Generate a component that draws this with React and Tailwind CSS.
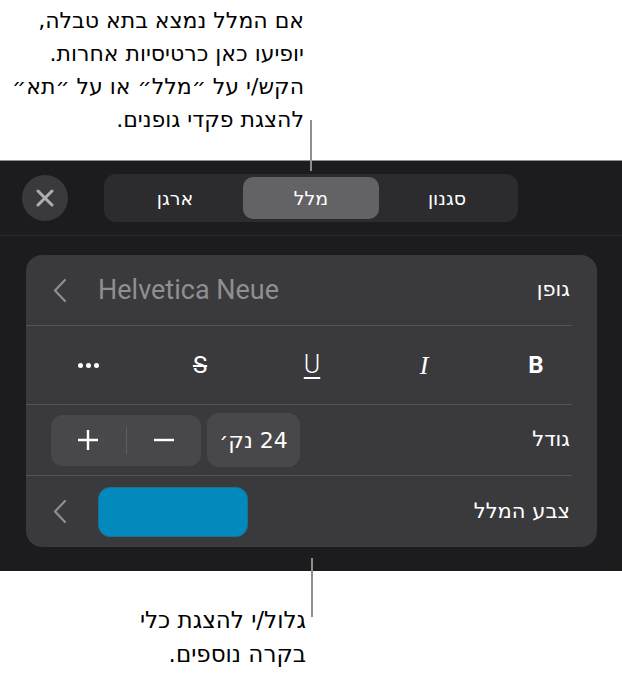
import React from 'react';

const Chevron = () => (
  <svg width="16" height="25" viewBox="0 0 16 25" fill="none">
    <polyline points="13,2 3,12.5 13,23" stroke="#8e8e93" strokeWidth="2.2" strokeLinecap="round" strokeLinejoin="round" />
  </svg>
);

const Sep = () => <div className="h-px mr-[25px] bg-[#545456]"></div>;

export default function App() {
  return (
    <div className="relative w-[622px] h-[673px] bg-white font-['DejaVu_Sans',sans-serif] overflow-hidden">
      {/* top callout */}
      <div className="h-[160px] pt-[4px]">
        <div dir="rtl" className="w-[304px] text-right text-[22px] leading-[33px] text-black">
          <div>אם המלל נמצא בתא טבלה,</div>
          <div>יופיעו כאן כרטיסיות אחרות.</div>
          <div>הקש/י על ״מלל״ או על ״תא״</div>
          <div>להצגת פקדי גופנים.</div>
        </div>
      </div>

      {/* dark panel */}
      <div className="h-[411px] bg-[#1c1c1e] border-t border-[#8e8e93]">
        <div className="h-[75px] flex items-center border-b border-[#2c2c2e]">
          <div className="ml-[22px] w-[46px] h-[46px] rounded-full bg-[#3a3a3c] flex items-center justify-center">
            <svg width="18" height="18" viewBox="0 0 18 18">
              <path d="M2 2 L16 16 M16 2 L2 16" stroke="#aeaeb2" strokeWidth="3" strokeLinecap="round" />
            </svg>
          </div>
          <div className="ml-[36px] w-[414px] h-[48px] rounded-[12px] bg-[#2c2c2e] p-[3px] grid grid-cols-3 text-[19px] text-white">
            <div className="flex items-center justify-center">ארגן</div>
            <div className="flex items-center justify-center rounded-[10px] bg-[#636366]">מלל</div>
            <div className="flex items-center justify-center">סגנון</div>
          </div>
        </div>

        <div className="mr-[25px] ml-[26px] mt-[19px] rounded-[16px] bg-[#3a3a3c] text-white">
          {/* font row */}
          <div className="h-[70px] flex items-center justify-between pl-[26px] pr-[27px]">
            <div className="flex items-center gap-[30px]">
              <Chevron />
              <span className="font-['Roboto',sans-serif] text-[27px] text-[#8e8e93]">Helvetica Neue</span>
            </div>
            <span className="text-[21px]">גופן</span>
          </div>
          <Sep />
          {/* style row */}
          <div className="h-[78px] grid grid-cols-5 items-center pl-[6px] pr-[5px] text-white">
            <div className="flex justify-center gap-[3px]">
              <span className="w-[5px] h-[5px] rounded-full bg-white"></span>
              <span className="w-[5px] h-[5px] rounded-full bg-white"></span>
              <span className="w-[5px] h-[5px] rounded-full bg-white"></span>
            </div>
            <div className="flex justify-center font-['Roboto',sans-serif] text-[24px] line-through decoration-[2px]">S</div>
            <div className="flex justify-center font-['Roboto',sans-serif] font-light text-[25px] underline decoration-[2px] underline-offset-[4px]">U</div>
            <div className="flex justify-center font-['Liberation_Serif',serif] italic text-[26px]">I</div>
            <div className="flex justify-center font-['Roboto',sans-serif] font-bold text-[24px]">B</div>
          </div>
          <Sep />
          {/* size row */}
          <div className="h-[70px] flex items-center justify-between pl-[25px] pr-[27px]">
            <div className="flex items-center gap-[6px]">
              <div className="w-[150px] h-[51px] rounded-[12px] bg-[#48484a] flex items-center">
                <div className="flex-1 flex justify-center">
                  <svg width="22" height="22" viewBox="0 0 22 22">
                    <path d="M11 1 V21 M1 11 H21" stroke="white" strokeWidth="2.4" />
                  </svg>
                </div>
                <div className="w-px h-[27px] bg-[#5e5e62]"></div>
                <div className="flex-1 flex justify-center">
                  <svg width="22" height="22" viewBox="0 0 22 22">
                    <path d="M1 11 H21" stroke="white" strokeWidth="2.4" />
                  </svg>
                </div>
              </div>
              <div dir="rtl" className="w-[93px] h-[54px] rounded-[12px] bg-[#48484a] flex items-center justify-center text-[22px]">
                24 נק׳
              </div>
            </div>
            <span className="text-[21px]">גודל</span>
          </div>
          <Sep />
          {/* color row */}
          <div className="h-[71px] flex items-center justify-between pl-[26px] pr-[27px]">
            <div className="flex items-center gap-[30px]">
              <Chevron />
              <div className="w-[150px] h-[50px] rounded-[12px] bg-[#028abd] border border-[#1a6f94]"></div>
            </div>
            <span dir="rtl" className="text-[21px]">צבע המלל</span>
          </div>
        </div>
      </div>

      {/* bottom callout */}
      <div dir="rtl" className="pt-[32px] w-[306px] text-right text-[23px] leading-[34px] text-black">
        <div>גלול/י להצגת כלי</div>
        <div>בקרה נוספים.</div>
      </div>

      {/* leader lines */}
      <div className="absolute left-[310px] top-[120px] w-[2px] h-[51px] bg-[#8e8e8e]"></div>
      <div className="absolute left-[311px] top-[558px] w-[2px] h-[59px] bg-[#8e8e8e]"></div>
    </div>
  );
}
